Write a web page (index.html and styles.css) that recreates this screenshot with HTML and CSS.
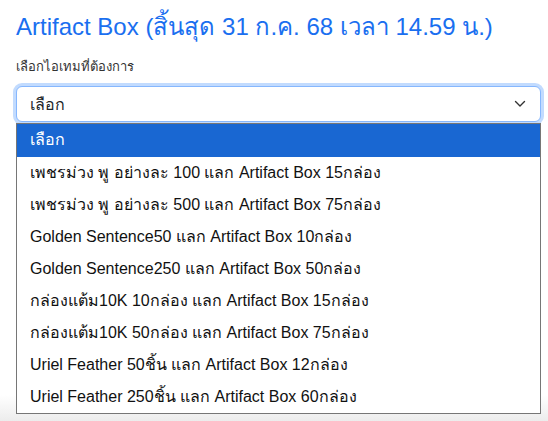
FILE: index.html
```html
<!DOCTYPE html>
<html lang="th">
<head>
<meta charset="utf-8">
<link rel="stylesheet" href="styles.css">
</head>
<body>
<div class="page">
  <h4 class="title">Artifact Box (สิ้นสุด 31 ก.ค. 68 เวลา 14.59 น.)</h4>
  <div class="label">เลือกไอเทมที่ต้องการ</div>
  <div class="select-wrap">
    <div class="select">
      <span class="select-value">เลือก</span>
      <svg class="chev" width="12" height="8" viewBox="0 0 12 8"><path d="M1.5 1.5 L6 6 L10.5 1.5" fill="none" stroke="#333" stroke-width="1.4" stroke-linecap="round" stroke-linejoin="round"/></svg>
    </div>
    <ul class="list">
      <li class="opt active">เลือก</li>
      <li class="opt">เพชรม่วง พู อย่างละ 100 แลก Artifact Box 15กล่อง</li>
      <li class="opt">เพชรม่วง พู อย่างละ 500 แลก Artifact Box 75กล่อง</li>
      <li class="opt">Golden Sentence50 แลก Artifact Box 10กล่อง</li>
      <li class="opt">Golden Sentence250 แลก Artifact Box 50กล่อง</li>
      <li class="opt">กล่องแต้ม10K 10กล่อง แลก Artifact Box 15กล่อง</li>
      <li class="opt">กล่องแต้ม10K 50กล่อง แลก Artifact Box 75กล่อง</li>
      <li class="opt">Uriel Feather 50ชิ้น แลก Artifact Box 12กล่อง</li>
      <li class="opt">Uriel Feather 250ชิ้น แลก Artifact Box 60กล่อง</li>
    </ul>
  </div>
</div>
</body>
</html>
```
FILE: styles.css
```css
html, body {
  margin: 0;
  padding: 0;
}
body {
  width: 548px;
  height: 421px;
  overflow: hidden;
  background: linear-gradient(to bottom, #ffffff 0, #ffffff 395px, #ececec 421px);
  font-family: "Liberation Sans", "Noto Sans", sans-serif;
  color: #212529;
}
.page {
  padding: 10px 7px 0 16px;
}
.title {
  margin: 0;
  font-size: 24px;
  font-weight: 400;
  line-height: 34px;
  color: #1a6ff0;
}
.label {
  margin-top: 13px;
  font-size: 13px;
  line-height: 20px;
  color: #333;
}
.select-wrap {
  margin-top: 9px;
}
.select {
  height: 34px;
  border: 1px solid #86b7fe;
  border-radius: 6px;
  box-shadow: 0 0 0 3px #c2dbfe;
  display: flex;
  align-items: center;
  justify-content: space-between;
  padding: 0 14px 0 13px;
  background: #fff;
  font-size: 16px;
}
.chev {
  display: block;
}
.list {
  list-style: none;
  margin: 1px 0 0 0;
  padding: 0;
  border: 1px solid #767676;
  background: #fff;
}
.opt {
  height: 32px;
  line-height: 32px;
  padding-left: 13px;
  font-size: 16px;
  color: #111;
  white-space: nowrap;
}
.opt.active {
  background: #1967d2;
  color: #fff;
  height: 33px;
}
```
